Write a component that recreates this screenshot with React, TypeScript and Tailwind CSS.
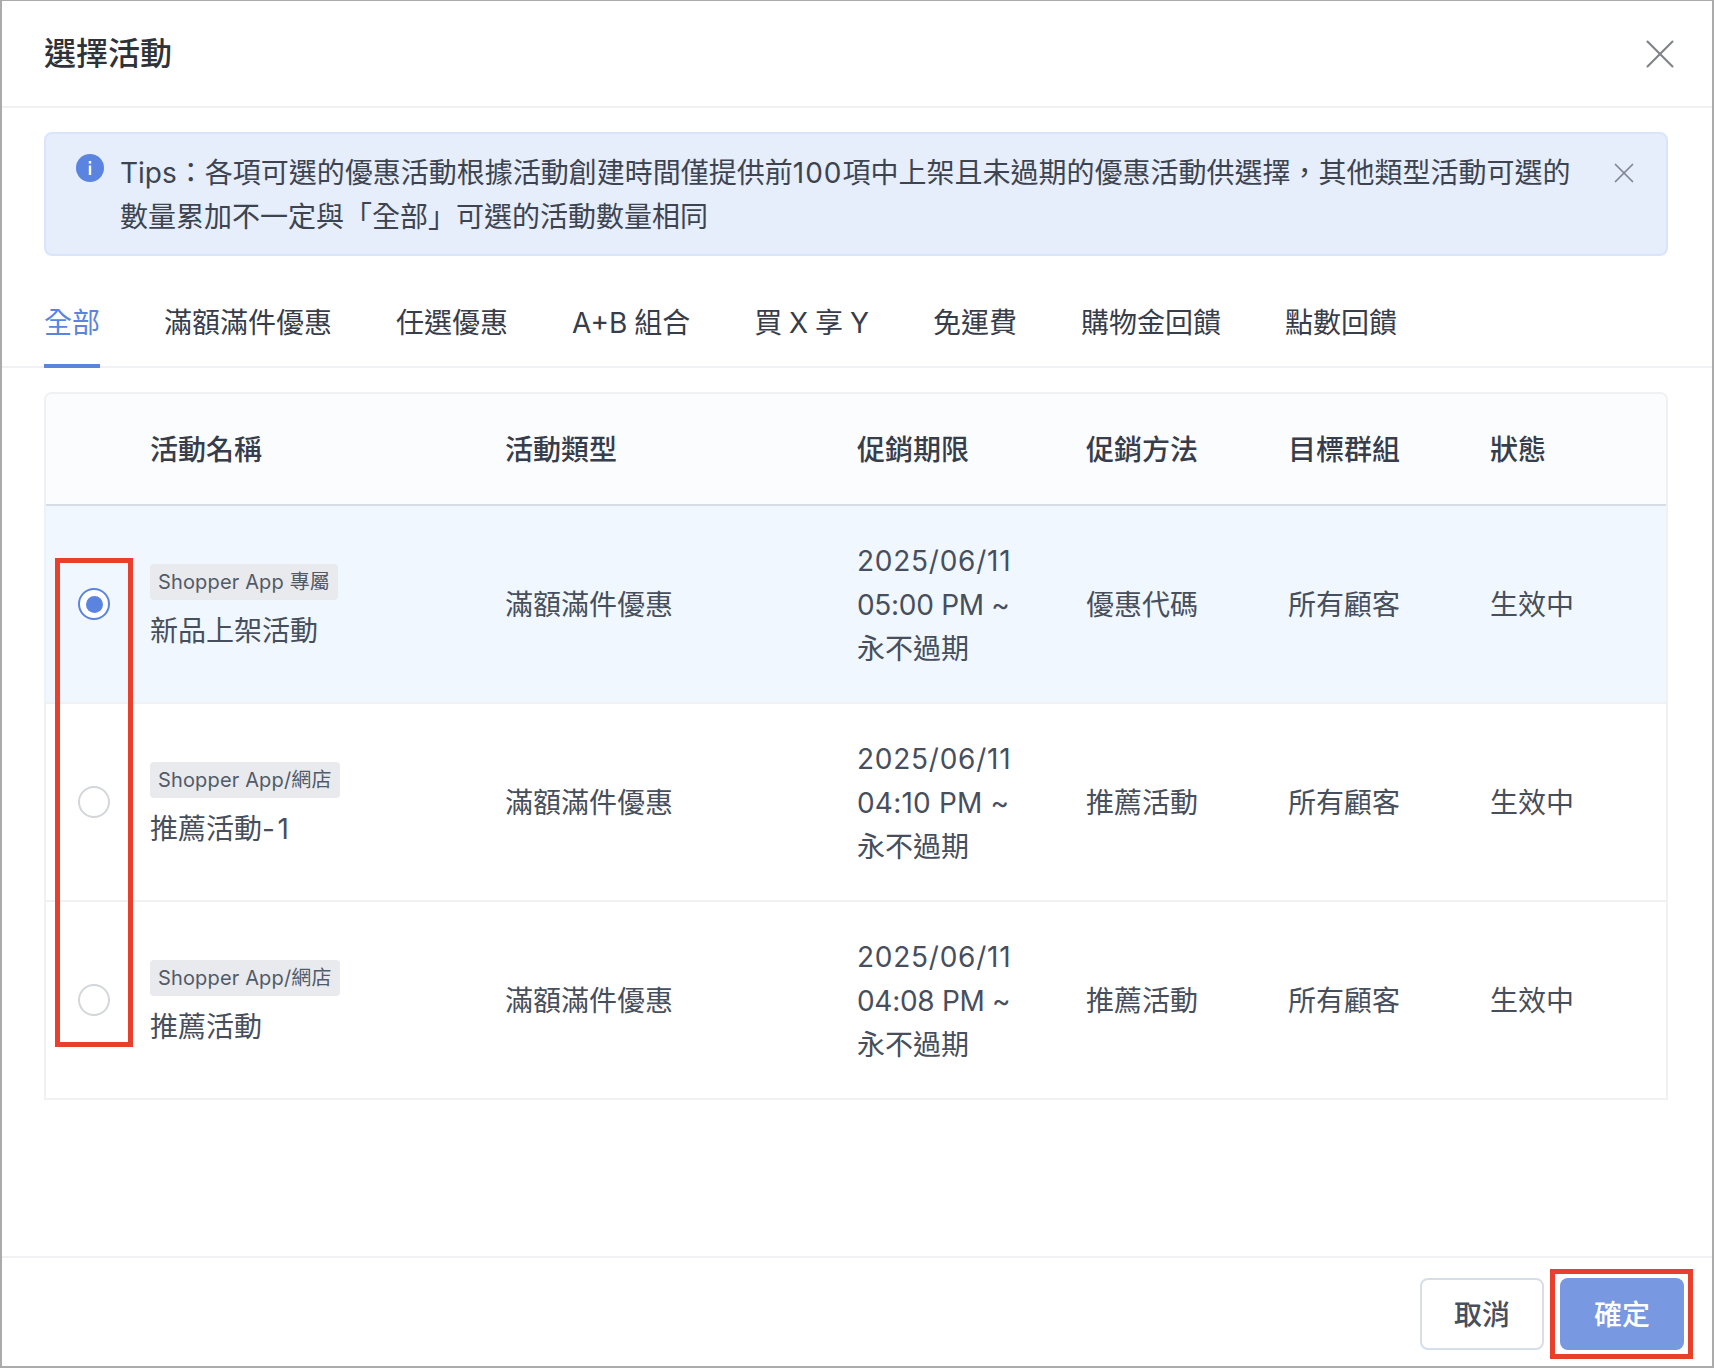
import { X } from 'lucide-react'

const tabs = ['全部', '滿額滿件優惠', '任選優惠', 'A+B 組合', '買 X 享 Y', '免運費', '購物金回饋', '點數回饋']

const rows = [
  { tag: 'Shopper App 專屬', name: '新品上架活動', suffix: '', time: '05:00 PM ~', timeClass: 'tracking-[-0.3px]', method: '優惠代碼', selected: true },
  { tag: 'Shopper App/網店', name: '推薦活動', suffix: '-1', time: '04:10 PM ~', timeClass: 'tracking-[0.2px]', method: '推薦活動', selected: false },
  { tag: 'Shopper App/網店', name: '推薦活動', suffix: '', time: '04:08 PM ~', timeClass: 'tracking-[-0.3px]', method: '推薦活動', selected: false },
]

export default function App() {
  return (
    <div className="relative flex flex-col w-[1714px] h-[1368px] bg-white border-t border-x-2 border-b-2 border-[#ababab] text-[28px] leading-[44px] text-[#474e5c] font-['Inter','Noto_Sans_CJK_TC',sans-serif]">
      {/* Header */}
      <div className="flex items-center justify-between h-[107px] shrink-0 pl-[42px] pr-[27px] border-b-2 border-[#f0f1f3]">
        <h1 className="text-[32px] font-medium text-[#2f3338]">選擇活動</h1>
        <X className="w-[50px] h-[50px] text-[#7f8388]" strokeWidth={1} />
      </div>

      {/* Tips */}
      <div className="flex items-start h-[124px] shrink-0 mt-[24px] ml-[42px] mr-[44px] pl-[30px] pr-[25px] pt-[17px] rounded-lg bg-[#e6edfb] border-2 border-[#d8e5fb]">
        <svg className="w-[28px] h-[28px] mt-[3px] shrink-0" viewBox="0 0 28 28">
          <circle cx="14" cy="14" r="14" fill="#5b84e1" />
          <rect x="12.8" y="11.5" width="2.4" height="9.5" fill="#fff" />
          <rect x="12.8" y="7" width="2.4" height="2.6" fill="#fff" />
        </svg>
        <p className="ml-[16px] flex-1 text-[#3d4450]">
          Tips：各項可選的優惠活動根據活動創建時間僅提供前<span className="tracking-[1px]">100</span>項中上架且未過期的優惠活動供選擇，其他類型活動可選的
          <br />
          數量累加不一定與「全部」可選的活動數量相同
        </p>
        <X className="w-[34px] h-[34px] mt-[5px] text-[#80868f] shrink-0" strokeWidth={1.2} />
      </div>

      {/* Tabs */}
      <div className="flex gap-[64px] shrink-0 h-[112px] items-end pl-[42px] border-b-2 border-[#f0f1f3] [word-spacing:-1px]">
        {tabs.map((tab, i) => (
          <div key={tab} className={`-mb-[2px] pb-[19px] border-b-4 ${i === 0 ? 'border-[#5b84e1] text-[#5b84e1]' : 'border-transparent text-[#373d4a]'}`}>
            {tab}
          </div>
        ))}
      </div>

      {/* Table */}
      <div className="shrink-0 mt-[24px] ml-[42px] mr-[44px] border-2 border-[#f0f1f3] rounded-t-lg overflow-hidden">
        <table className="w-full table-fixed border-collapse">
          <thead>
            <tr className="h-[111px] bg-[#fbfcfe] border-b-2 border-[#d6dde4] text-left text-[#373d4a]">
              <th className="w-[104px]" />
              <th className="w-[355px] pt-[2px] font-medium">活動名稱</th>
              <th className="w-[352px] pt-[2px] font-medium">活動類型</th>
              <th className="w-[229px] pt-[2px] font-medium">促銷期限</th>
              <th className="w-[202px] pt-[2px] font-medium">促銷方法</th>
              <th className="w-[202px] pt-[2px] font-medium">目標群組</th>
              <th className="pt-[2px] font-medium">狀態</th>
            </tr>
          </thead>
          <tbody>
            {rows.map(row => (
              <tr key={row.time} className={`h-[198px] last:h-[197px] border-b-2 last:border-b-0 border-[#eff1f3] ${row.selected ? 'bg-[#f0f7fe]' : 'bg-white'}`}>
                <td>
                  <div className="flex justify-center pr-[8px]">
                    {row.selected ? (
                      <div className="flex items-center justify-center w-[32px] h-[32px] rounded-full border-2 border-[#5b84e1] bg-white">
                        <div className="w-[17px] h-[17px] rounded-full bg-[#5b84e1]" />
                      </div>
                    ) : (
                      <div className="w-[32px] h-[32px] rounded-full border-2 border-[#d3d6da] bg-white" />
                    )}
                  </div>
                </td>
                <td>
                  <div className="flex flex-col items-start gap-[9px] pt-[9px]">
                    <span className="px-[8px] h-[36px] leading-[36px] rounded bg-[#e8eaee] text-[20px] tracking-[0.15px] text-[#525a68] whitespace-nowrap">{row.tag}</span>
                    <span>{row.name}{row.suffix && <span className="tracking-[2.5px]">{row.suffix}</span>}</span>
                  </div>
                </td>
                <td className="pt-[2px]">滿額滿件優惠</td>
                <td className="pt-[2px]">
                  <span className="tracking-[0.75px]">2025/06/11</span><br /><span className={row.timeClass}>{row.time}</span><br />永不過期
                </td>
                <td className="pt-[2px]">{row.method}</td>
                <td className="pt-[2px]">所有顧客</td>
                <td className="pt-[2px]">生效中</td>
              </tr>
            ))}
          </tbody>
        </table>
      </div>

      {/* Footer */}
      <div className="mt-auto flex justify-end gap-[16px] h-[110px] shrink-0 pt-[20px] pr-[28px] border-t-2 border-[#f0f1f3]">
        <button type="button" className="w-[124px] h-[72px] pt-[2px] rounded-lg bg-white border-2 border-[#d6dee8] font-medium text-[#474e5c]">取消</button>
        <button type="button" className="w-[124px] h-[72px] pt-[2px] rounded-lg bg-[#7898e2] font-medium text-white">確定</button>
      </div>

      {/* Annotation boxes */}
      <div className="absolute left-[53px] top-[557px] w-[78px] h-[489px] border-[5px] border-[#e8402a]" />
      <div className="absolute left-[1548px] top-[1268px] w-[143px] h-[90px] border-[5px] border-[#e8402a]" />
    </div>
  )
}
